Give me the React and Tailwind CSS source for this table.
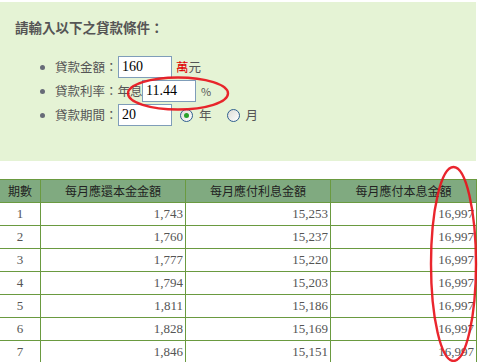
const rows = [
  [1, '1,743', '15,253', '16,997'],
  [2, '1,760', '15,237', '16,997'],
  [3, '1,777', '15,220', '16,997'],
  [4, '1,794', '15,203', '16,997'],
  [5, '1,811', '15,186', '16,997'],
  [6, '1,828', '15,169', '16,997'],
  [7, '1,846', '15,151', '16,997'],
]

const cjk = { fontFamily: '"Noto Sans CJK TC", "Liberation Sans", sans-serif' }
const num = { fontFamily: '"Liberation Serif", "Noto Sans CJK TC", serif' }

function Bullet() {
  return <span className="shrink-0 inline-block w-[5px] h-[5px] rounded-full bg-[#676b78] mr-[10px] ml-[40px]" />
}

function Field({ value }) {
  return (
    <span
      className="shrink-0 inline-flex items-start w-[54px] h-[22px] border border-[#7f9db9] bg-white pl-[3px] pt-[1px] text-[14px] leading-[18px] text-black"
      style={num}
    >
      {value}
    </span>
  )
}

function Radio({ checked }) {
  return (
    <span className="shrink-0 inline-flex items-center justify-center w-[13px] h-[13px] rounded-full border border-[#2f5f8f] bg-gradient-to-br from-[#dcdcd6] to-white">
      {checked && <span className="w-[5px] h-[5px] rounded-full bg-[#2aa22a]" />}
    </span>
  )
}

export default function App() {
  return (
    <div className="relative w-[480px] h-[362px] overflow-hidden bg-white text-[#555]" style={cjk}>
      <div className="mt-[2px] w-[476px] h-[159px] bg-[#e5f3d5] pt-[16px]">
        <h1 className="pl-[15px] text-[13.5px] font-bold leading-[18px] text-[#555]">請輸入以下之貸款條件：</h1>
        <ul className="mt-[19px] text-[12.5px] whitespace-nowrap">
          <li className="flex items-center h-[24px]">
            <Bullet />
            <span className="shrink-0 w-[63px]">貸款金額：</span>
            <Field value="160" />
            <span className="ml-[4px]">
              <span className="text-[#e00000]">萬</span>元
            </span>
          </li>
          <li className="flex items-center h-[24px]">
            <Bullet />
            <span className="shrink-0 w-[87px]">貸款利率：年息</span>
            <Field value="11.44" />
            <span className="ml-[5px] text-[11px]">%</span>
          </li>
          <li className="flex items-center h-[24px]">
            <Bullet />
            <span className="shrink-0 w-[63px]">貸款期間：</span>
            <Field value="20" />
            <span className="ml-[8px] flex items-center gap-[6px]">
              <Radio checked />
              <span>年</span>
              <span className="w-[3px]" />
              <Radio />
              <span>月</span>
            </span>
          </li>
        </ul>
      </div>

      <table className="mt-[18px] ml-[-1px] w-[477px] table-fixed border-collapse text-[12px]">
        <colgroup>
          <col className="w-[41px]" />
          <col className="w-[145px]" />
          <col className="w-[145px]" />
          <col className="w-[146px]" />
        </colgroup>
        <thead>
          <tr className="h-[23px] bg-[#80aa80] text-[#222]">
            {['期數', '每月應還本金金額', '每月應付利息金額', '每月應付本息金額'].map((h) => (
              <th key={h} className="border border-[#6a9a40] font-normal p-0 text-center">
                {h}
              </th>
            ))}
          </tr>
        </thead>
        <tbody style={num}>
          {rows.map((r) => (
            <tr key={r[0]} className="h-[23px] text-[13px] text-[#555]">
              <td className="border border-[#6a9a40] p-0 text-center">{r[0]}</td>
              <td className="border border-[#6a9a40] p-0 pr-[2px] text-right">{r[1]}</td>
              <td className="border border-[#6a9a40] p-0 pr-[2px] text-right">{r[2]}</td>
              <td className="border border-[#6a9a40] p-0 pr-[2px] text-right">{r[3]}</td>
            </tr>
          ))}
        </tbody>
      </table>

      <svg className="absolute left-0 top-0 pointer-events-none" width="480" height="362">
        <ellipse cx="178" cy="93.5" rx="50" ry="16" fill="none" stroke="#e8141c" strokeWidth="2.4" opacity="0.92" />
        <ellipse cx="453.5" cy="264" rx="22.5" ry="97" fill="none" stroke="#e8141c" strokeWidth="2.4" opacity="0.92" />
      </svg>
    </div>
  )
}
